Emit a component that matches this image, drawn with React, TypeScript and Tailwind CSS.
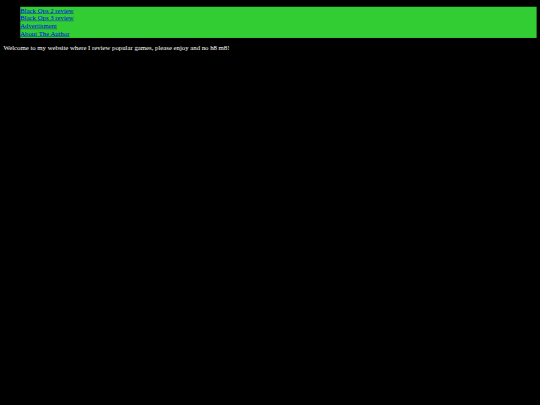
export default function App() {
  const links = ["Black Ops 2 review", "Black Ops 3 review", "Advertisment", "About The Author"];
  return (
    <div className="w-[540px] h-[405px] overflow-hidden bg-black">
      <div
        className="w-[1280px] h-[960px] origin-top-left scale-[0.421875] px-[8px] pt-[16px] text-[16px] leading-[18.4px]"
        style={{ fontFamily: '"Liberation Serif", "Times New Roman", serif' }}
      >
        <ul className="ml-[40px] bg-[#32cd32] list-none p-0">
          {links.map((l) => (
            <li key={l}>
              <a href="#" className="text-[#0000ee] underline">{l}</a>
            </li>
          ))}
        </ul>
        <p className="mt-[14px] text-white">
          Welcome to my website where I review popular games, please enjoy and no h8 m8!
        </p>
      </div>
    </div>
  );
}
